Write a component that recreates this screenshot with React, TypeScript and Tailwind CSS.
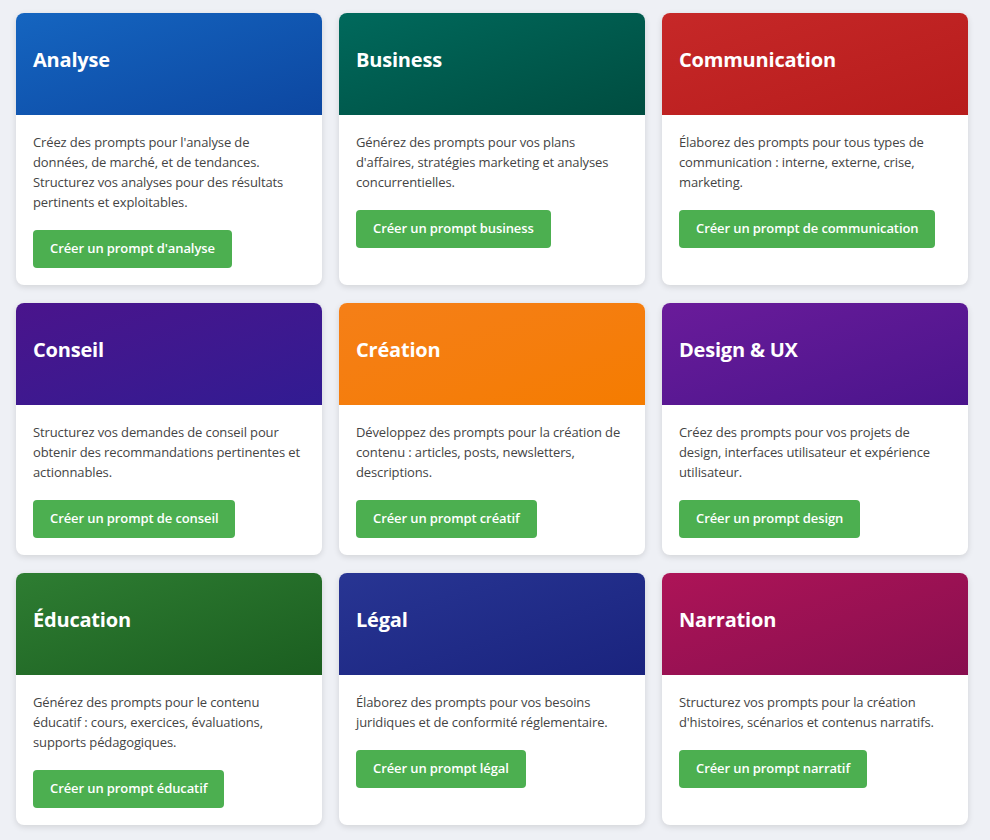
import React from "react";

type Card = { title: string; desc: string; btn: string; grad: string };

const cards: Card[] = [
  { title: "Analyse", desc: "Créez des prompts pour l'analyse de données, de marché, et de tendances. Structurez vos analyses pour des résultats pertinents et exploitables.", btn: "Créer un prompt d'analyse", grad: "bg-gradient-to-br from-[#1565c0] to-[#0d47a1]" },
  { title: "Business", desc: "Générez des prompts pour vos plans d'affaires, stratégies marketing et analyses concurrentielles.", btn: "Créer un prompt business", grad: "bg-gradient-to-br from-[#00695c] to-[#004d40]" },
  { title: "Communication", desc: "Élaborez des prompts pour tous types de communication : interne, externe, crise, marketing.", btn: "Créer un prompt de communication", grad: "bg-gradient-to-br from-[#c62828] to-[#b71c1c]" },
  { title: "Conseil", desc: "Structurez vos demandes de conseil pour obtenir des recommandations pertinentes et actionnables.", btn: "Créer un prompt de conseil", grad: "bg-gradient-to-br from-[#4a148c] to-[#311b92]" },
  { title: "Création", desc: "Développez des prompts pour la création de contenu : articles, posts, newsletters, descriptions.", btn: "Créer un prompt créatif", grad: "bg-gradient-to-br from-[#f57f17] to-[#f57c00]" },
  { title: "Design & UX", desc: "Créez des prompts pour vos projets de design, interfaces utilisateur et expérience utilisateur.", btn: "Créer un prompt design", grad: "bg-gradient-to-br from-[#6a1b9a] to-[#4a148c]" },
  { title: "Éducation", desc: "Générez des prompts pour le contenu éducatif : cours, exercices, évaluations, supports pédagogiques.", btn: "Créer un prompt éducatif", grad: "bg-gradient-to-br from-[#2e7d32] to-[#1b5e20]" },
  { title: "Légal", desc: "Élaborez des prompts pour vos besoins juridiques et de conformité réglementaire.", btn: "Créer un prompt légal", grad: "bg-gradient-to-br from-[#283593] to-[#1a237e]" },
  { title: "Narration", desc: "Structurez vos prompts pour la création d'histoires, scénarios et contenus narratifs.", btn: "Créer un prompt narratif", grad: "bg-gradient-to-br from-[#ad1457] to-[#880e4f]" },
];

export default function App() {
  return (
    <div
      className="min-h-[840px] bg-[#eef0f5] pl-4 pt-[13px]"
      style={{ fontFamily: '"Open Sans", "Noto Sans", sans-serif' }}
    >
      <div className="grid grid-cols-[306px_306px_306px] gap-x-[17px] gap-y-[18px]">
        {cards.map((c) => (
          <div key={c.title} className="flex flex-col overflow-hidden rounded-lg bg-white shadow-[0_2px_6px_rgba(0,0,0,0.12)]">
            <div className={`flex h-[102px] shrink-0 items-center px-[17px] pb-[8px] ${c.grad}`}>
              <h2 className="text-[20px] font-bold tracking-[-0.2px] text-white">{c.title}</h2>
            </div>
            <div className="px-[17px] pb-[17px] pt-[17px]">
              <p className="text-[13px] leading-[20px] tracking-[-0.12px] text-[#444]">{c.desc}</p>
              <button className="mt-[18px] h-[38px] rounded-[4px] bg-[#4caf50] px-[17px] text-[13px] font-semibold tracking-[-0.1px] text-white">
                {c.btn}
              </button>
            </div>
          </div>
        ))}
      </div>
    </div>
  );
}
